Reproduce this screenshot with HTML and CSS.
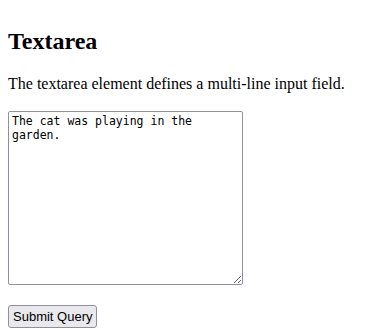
FILE: index.html
```html
<!DOCTYPE html>
<html>
<head>
<meta charset="UTF-8">
<title>Textarea</title>
<link rel="stylesheet" href="styles.css">
</head>
<body>

<h1 class="title">Textarea</h1>

<p class="intro">The textarea element defines a multi-line input field.</p>

<form action="/action_page.php">
  <textarea class="message" name="message" rows="10" cols="30">The cat was playing in the garden.</textarea>
  <br><br>
  <input class="submit" type="submit" value="Submit Query">
</form>

</body>
</html>
```

FILE: styles.css
```css
body {
    font-family: "Liberation Serif", "Times New Roman", serif;
}

.title {
    font-size: 1.5em;
    margin: 0.83em 0;
}

.intro {
    margin: 16px 0 18px;
}

.message {
    box-sizing: border-box;
    width: 235px;
    height: 174px;
    font-family: "DejaVu Sans Mono", monospace;
    font-size: 11.5px;
    line-height: 14px;
    border: 1px solid #8f8f9d;
    border-radius: 2px;
    padding: 2px 3px;
    vertical-align: bottom;
    overflow: hidden;
}

.submit {
    font-family: "Liberation Sans", Tahoma, sans-serif;
    font-size: 13px;
    height: 23px;
    margin-top: 2px;
    padding: 1px 4px;
    background: #e9e9ed;
    border: 1px solid #8f8f9d;
    border-radius: 3px;
    color: #000;
}
```
